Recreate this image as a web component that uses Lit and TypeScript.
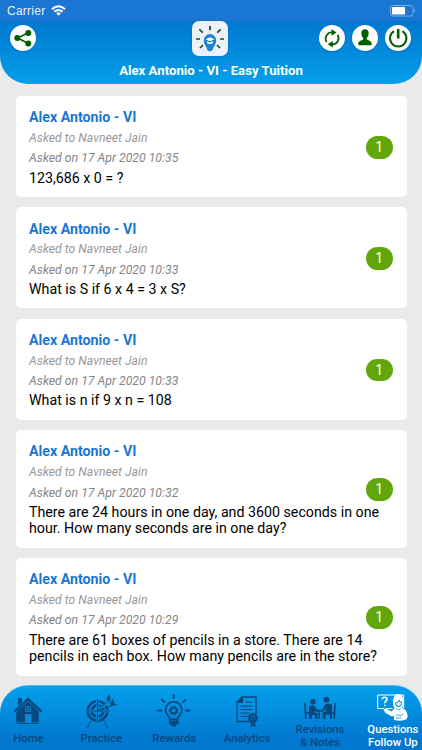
import { LitElement, html, css, svg } from "lit";
import { customElement, property } from "lit/decorators.js";
import { classMap } from "lit/directives/class-map.js";

interface Question {
	date: string;
	text: string;
}

const questions: Question[] = [
	{ date: "17 Apr 2020 10:35", text: "123,686 x 0 = ?" },
	{ date: "17 Apr 2020 10:33", text: "What is S if 6 x 4 = 3 x S?" },
	{ date: "17 Apr 2020 10:33", text: "What is n if 9 x n = 108" },
	{
		date: "17 Apr 2020 10:32",
		text: "There are 24 hours in one day, and 3600 seconds in one\nhour. How many seconds are in one day?",
	},
	{
		date: "17 Apr 2020 10:29",
		text: "There are 61 boxes of pencils in a store. There are 14\npencils in each box. How many pencils are in the store?",
	},
];

const icons = {
	home: svg`
		<path fill="currentColor" d="M0 14.5 14 1.5 28 14.5 26 17 24.700 16V28H2.300V16L1 17ZM4 2h4v4.200l-4 3.600z" />
		<path stroke="#078fdf" stroke-width=".8" fill="none" d="M1.500 16.600 14 5 26.500 16.600M11.500 10.500h5v5h-5zM14 10.500v5M11.500 13h5" />
		<path fill="#0788da" d="M11 18h6.500v9H11z" />
		<path stroke="#0788da" stroke-width=".7" d="M2 26.300h24" />
	`,
	practice: svg`
		<circle cx="11.500" cy="17" r="9.800" fill="none" stroke="currentColor" stroke-width="2.600" />
		<circle cx="11.500" cy="17" r="5.700" fill="none" stroke="currentColor" stroke-width="2.800" />
		<path stroke="#078fdf" stroke-width="2.400" d="M11.500 5v24M0 17h24M12 16 27 5" />
		<path stroke="currentColor" stroke-width="1" fill="none" d="M11.500 5v24M0 17h24M11.500 17 24 5M11.500 17l15-5.500M4.500 27 1.500 34M18 27l3.500 7" />
		<path fill="currentColor" d="M20.500 5 23 0l1.500 4-1.500 4zM23.500 9.500 27 5l1 4 3 2-6 1z" />
	`,
	rewards: svg`
		<g fill="none" stroke="currentColor" stroke-width="1.900">
			<path d="M13 25.500c0-3.500-4.500-4-4.500-9.500a8.200 8.200 0 0 1 16.400 0c0 5.500-4.500 6-4.500 9.500zM13 25v4.500h7.500V25M13.500 28h6.500M14.500 31.500h4.500" />
			<circle cx="16.700" cy="16.500" r="2.900" />
			<path d="M16.700 0v5M4.500 5.300l3.300 3.200M29 5.300l-3.300 3.200M0 16.500h5M28.300 16.500h5" />
			<path stroke-dasharray="1.500 2" stroke-width="1.300" d="M12.500 16.500a4.200 4.200 0 1 1 8.400 0 4.200 4.200 0 1 1-8.400 0" />
		</g>
	`,
	analytics: svg`
		<path fill="none" stroke="currentColor" stroke-width="1.300" d="M14 25.500H1V6L6 1h14v17" />
		<path fill="currentColor" d="M1 7V6l5-5h1v6z" />
		<path stroke="currentColor" stroke-width="1.200" d="M9.500 6h7M4.500 10h12M4.500 13.500h12M4.500 17h9M4.500 20.500h8" />
		<circle cx="17" cy="22" r="3.400" fill="none" stroke="currentColor" stroke-width="2.300" />
		<circle cx="17" cy="22" r="4.600" fill="none" stroke="currentColor" stroke-width="1" stroke-dasharray="1.200 1.200" />
		<path fill="currentColor" d="M17 19.700l.7 1.500 1.700.2-1.200 1.200.3 1.700-1.500-.8-1.500.8.3-1.700-1.200-1.200 1.700-.2zM14.800 26.500h4.600v5l-2.300-2-2.300 2z" />
	`,
	revisions: svg`
		<g fill="currentColor">
			<circle cx="9" cy="4.800" r="2.700" />
			<circle cx="22.500" cy="2.700" r="2.900" />
			<path d="M5 9.500q3-2.500 6 0l2 3 4 .4v1.200H12l-1-1v2.900h2.500v6H11v-4H8v4H5zM28 8q-4-3-7.500 0l-2 4.500-3.500.4v1.200h4.500l2-2.500V15h-3v7h3v-4.500H26V22h2z" />
			<path d="M0 6h1.500l1 9H6v1.500H2.500V22H1zM32 6h-1.500l-1 9H27v1.500h2.500V22H31zM12 13h8v1.800h-8zM14.500 14.500H16V22h-1.500z" />
		</g>
	`,
	questions: svg`
		<path fill="none" stroke="currentColor" stroke-width="1" d="M7 14.500H.7V1h26v13M9.500 14.500h6" />
		<path fill="none" stroke="currentColor" stroke-width="1.600" d="M5.300 5.200q0-2 2.200-2 2.400 0 2.400 2 0 1.200-1.200 2-.9.700-.9 2M7.800 10.800v1.500" />
		<path fill="currentColor" d="M16 8.500Q16 0 21.300 0T26.500 8.500Q26.500 12 25 14 29.500 15 30.500 21 31 25 27.500 26 23 27.500 17 26V22L15 22.500 8.500 19 6.500 15.500 9 14 11 15.500 14.500 17.500 17.500 14.500Q16 12.500 16 8.500z" />
		<path fill="#0693e1" d="M18 8.500Q21.500 8 22.300 5.500 23.200 7.500 25 8.500 24.700 13 21.500 13T18 8.500z" />
		<path fill="currentColor" d="M19 9.200Q21.500 8.800 22.400 7.500 23 8.600 24.100 9.200 23.500 12.100 21.500 12.100T19 9.200z" />
		<path stroke="#0789da" stroke-width=".8" fill="none" d="M20 9.900h.8M22.300 9.900h.8M19.500 14.500l2 1.500 2-1.500M18.500 22.500 21 20.500 23 22 26.500 20M19 24h5.500" />
	`,
};

@customElement("status-bar")
export class StatusBar extends LitElement {
	static override styles = css`
		:host {
			align-items: center;
			background: #1976d2;
			box-sizing: border-box;
			color: #e7f1fb;
			display: flex;
			font: 12px "Liberation Sans", sans-serif;
			height: 20.500px;
			padding: 1px 6px 0 7px;
		}

		.carrier { letter-spacing: 0.250px }
		.wifi { margin-left: 6px }
		.battery { margin-left: auto }
	`;

	override render() {
		return html`
			<span class="carrier">Carrier</span>
			<svg class="wifi" width="15" height="11" viewBox="0 0 15 11" fill="none" stroke="#fff" stroke-width="2">
				<path d="M1 4.200q6.500-5.800 13 0M3.400 6.800q4.100-3.600 8.200 0" />
				<path fill="#fff" stroke="none" d="M5.200 8.200q2.300-1.800 4.600 0L7.500 10.700z" />
			</svg>
			<svg class="battery" width="26" height="12" viewBox="0 0 26 12">
				<rect x=".5" y=".5" width="22.500" height="10.500" rx="2.500" fill="none" stroke="#77aee5" />
				<rect x="2" y="2" width="13" height="7.500" rx="1" fill="#fff" />
				<path fill="#77aee5" d="M24.200 4q2 1.700 0 3.600z" />
			</svg>
		`;
	}
}

@customElement("top-bar")
export class TopBar extends LitElement {
	static override styles = css`
		:host {
			background: linear-gradient(#0277d0, #039fea);
			border-radius: 0 0 28px 28px;
			box-sizing: border-box;
			display: block;
			height: 63.500px;
		}

		.row {
			display: grid;
			grid-template-columns: 1fr 36px 1fr;
			padding: 0 10px;
		}

		.actions {
			display: flex;
			gap: 7.300px;
			justify-content: flex-end;
			padding-top: 4.300px;
		}

		.actions.start { justify-content: flex-start }

		.round {
			background: #fff;
			border-radius: 50%;
			box-shadow: 0 1px 2px #0058a880;
			height: 26px;
			width: 26px;
		}

		.actions:not(.start) { margin-right: 0.700px }

		svg { display: block }

		.logo {
			background: #eef1fc;
			border-radius: 7px;
			box-shadow: 0 0 2px #005caa99;
			height: 35.500px;
			margin-left: -1px;
			width: 36px;
		}

		h1 {
			color: #fff;
			font-size: 13.200px;
			font-weight: 700;
			line-height: 16px;
			margin: 6.500px 0 0;
			text-align: center;
		}
	`;

	override render() {
		return html`
			<div class="row">
				<div class="actions start">
					<div class="round">
						<svg viewBox="0 0 26 26" fill="#006000" stroke="#006000" stroke-width="1.600">
							<path fill="none" d="M18.500 7.800 7.500 13l11 5.500" />
							<circle cx="18.300" cy="8" r="2.200" /><circle cx="7.300" cy="13" r="2.200" /><circle cx="18.300" cy="18.400" r="2.200" />
						</svg>
					</div>
				</div>
				<div class="logo">
					<svg viewBox="0 0 36 36">
						<path stroke="#0c5a16" stroke-width="1.700" d="M4 18h4M28 18h4M7.300 8.300l3.500 3.300M28.700 8.300l-3.500 3.300M8 27l3-3M28 27l-3-3" />
						<path stroke="#0c5a16" stroke-width="1.800" d="M18 5v4.200" />
						<path fill="#1a84d0" d="M15.300 29c-.3-3-3.500-5-3.500-9.700a6.200 6.200 0 0 1 12.400 0c0 4.700-3.200 6.700-3.500 9.700q-2.700 2.400-5.400 0z" />
						<path fill="#fff" d="M13.500 18.300 18 16.200l4.500 2.100L18 20.200zM15 20.300l3 1.300 3-1.300v1.700L18 23.200l-3-1.200z" />
					</svg>
				</div>
				<div class="actions">
					<div class="round">
						<svg viewBox="0 0 26 26" fill="none" stroke="#006000" stroke-width="1.700">
							<path d="M7.700 17a6.300 6.300 0 0 1 6-9.700M18.500 9.700a6.300 6.300 0 0 1-6 9.700" />
							<path fill="#006000" stroke="none" d="M12.500 4.200 17.500 7.500 12.500 10.700zM13.800 16 8.700 19.300l5.100 3.300z" />
						</svg>
					</div>
					<div class="round">
						<svg viewBox="0 0 26 26" fill="#006000">
							<path d="M13 4.300c2.500 0 3.900 1.700 3.600 4.400-.1 1.900-.9 3.400-1.800 4.200v1.500c1 .8 5 1.400 5 4.300 0 1.200-.6 1.600-1.600 1.600H7.800c-1 0-1.600-.4-1.600-1.600 0-2.900 4-3.500 5-4.300v-1.500c-.9-.8-1.700-2.300-1.800-4.200C9.100 6 10.500 4.300 13 4.300z" />
						</svg>
					</div>
					<div class="round">
						<svg viewBox="0 0 26 26" fill="none" stroke="#006000" stroke-width="2">
							<path d="M9 6.200a8.200 8.200 0 1 0 8.400 0" />
							<path stroke-width="2.600" stroke-linecap="round" d="M13.200 5v7.500" />
						</svg>
					</div>
				</div>
			</div>
			<h1>Alex Antonio - VI - Easy Tuition</h1>
		`;
	}
}

@customElement("question-card")
export class QuestionCard extends LitElement {
	static override styles = css`
		:host {
			align-items: center;
			background: #fff;
			border-radius: 5px;
			box-sizing: border-box;
			display: flex;
			justify-content: space-between;
			padding: 12.300px 13.500px 10.800px;
		}

		h2 {
			color: #1976d2;
			font-size: 14.200px;
			font-weight: 700;
			line-height: 19.700px;
			margin: 0;
		}

		.meta {
			color: #999;
			font-size: 12.250px;
			font-style: italic;
			line-height: 20.400px;
		}

		.date { color: #858585 }

		.text {
			color: #000;
			font-size: 14.230px;
			line-height: 16.500px;
			margin-top: 0.900px;
		}

		.body { width: 0 }

		.body > * { white-space: pre }

		.badge {
			background: #61a60a;
			border-radius: 11.500px;
			color: #fff;
			font-size: 14px;
			height: 22.500px;
			line-height: 22.500px;
			text-align: center;
			width: 27.500px;
		}
	`;

	@property()
	date: string = "";

	@property()
	text: string = "";

	override render() {
		return html`
			<div class="body">
				<h2>Alex Antonio - VI</h2>
				<div class="meta">Asked to Navneet Jain</div>
				<div class="meta date">Asked on ${this.date}</div>
				<div class="text">${this.text}</div>
			</div>
			<div class="badge">1</div>
		`;
	}
}

@customElement("bottom-nav")
export class BottomNav extends LitElement {
	static override styles = css`
		:host {
			background: linear-gradient(#03a0eb, #0277d0 85%);
			border-radius: 28px 28px 0 0;
			border-top: 1px solid #52bdf0;
			box-sizing: border-box;
			display: block;
			height: 65px;
			overflow: hidden;
		}

		nav {
			display: grid;
			grid-template-columns: repeat(6, 72.900px);
			height: 100%;
			margin-left: -8px;
		}

		.tab {
			align-items: center;
			color: #07477c;
			display: flex;
			flex-direction: column;
			font-size: 11.300px;
			font-weight: 500;
			justify-content: space-between;
			line-height: 13px;
			padding: 8px 0 5.500px;
			text-align: center;
			white-space: pre;
		}

		.tab.double { padding-bottom: 1.500px }

		.tab.active { color: #fff }

		svg { flex: none }
	`;

	private tabs = [
		{ label: "Home", icon: icons.home, w: 28, h: 34, box: "0 -2 28 34" },
		{ label: "Practice", icon: icons.practice, w: 31, h: 35, box: "0 0 31 35" },
		{ label: "Rewards", icon: icons.rewards, w: 34, h: 34, box: "0 0 34 34" },
		{ label: "Analytics", icon: icons.analytics, w: 22, h: 34, box: "0 -2 22 34" },
		{ label: "Revisions\n& Notes", icon: icons.revisions, w: 32, h: 25, box: "0 -3 32 25" },
		{ label: "Questions\nFollow Up", icon: icons.questions, w: 31, h: 27, box: "0 0 31 27" },
	];

	override render() {
		return html`
			<nav>
				${this.tabs.map(
					(tab, i) => html`
						<div class="${classMap({ tab: true, double: tab.label.includes("\n"), active: i === 5 })}">
							<svg width="${tab.w}" height="${tab.h}" viewBox="${tab.box}">${tab.icon}</svg>
							<span>${tab.label}</span>
						</div>
					`
				)}
			</nav>
		`;
	}
}

@customElement("app-root")
export class AppRoot extends LitElement {
	static override styles = css`
		:host {
			background: #eaeaea;
			display: flex;
			flex-direction: column;
			font-family: Roboto, sans-serif;
			height: 750px;
			overflow: hidden;
		}

		status-bar, top-bar, bottom-nav { flex: none }

		.list {
			display: flex;
			flex: 1;
			flex-direction: column;
			gap: 10.400px;
			min-height: 0;
			padding: 12px 15.500px 0;
		}
	`;

	override render() {
		return html`
			<status-bar></status-bar>
			<top-bar></top-bar>
			<div class="list">
				${questions.map((q) => html`<question-card date="${q.date}" text="${q.text}"></question-card>`)}
			</div>
			<bottom-nav></bottom-nav>
		`;
	}
}
